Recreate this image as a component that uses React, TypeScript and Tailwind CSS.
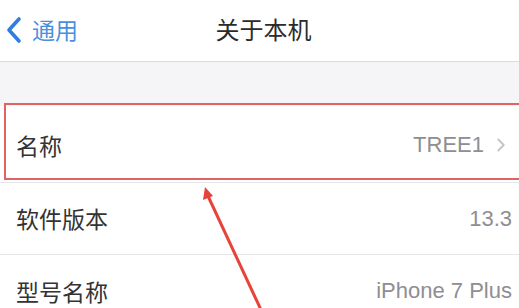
import { ChevronRight } from 'lucide-react'

const rows = [
  { label: '名称', value: 'TREE1', arrow: true },
  { label: '软件版本', value: '13.3', arrow: false },
  { label: '型号名称', value: 'iPhone 7 Plus', arrow: false },
]

const cjk = { fontFamily: '"Noto Sans CJK SC", "Liberation Sans", sans-serif' }

export default function App() {
  return (
    <div className="relative w-[519px] h-[308px] overflow-hidden bg-white" style={cjk}>
      {/* nav bar */}
      <div className="relative h-[62px] border-b border-[#dcdcdf] flex items-center">
        <div className="flex items-center pl-[6px] text-[#4a8fdc]">
          <svg width="16" height="28" viewBox="0 0 16 28" className="mr-[10px] -mt-[2px]">
            <path d="M13 3 L3 14 L13 25" fill="none" stroke="#2f7de1" strokeWidth="3.6" strokeLinecap="round" strokeLinejoin="round" />
          </svg>
          <span className="text-[23px] leading-none -mt-[3px]">通用</span>
        </div>
        <div className="absolute left-0 right-0 top-0 h-full flex items-center justify-center">
          <span className="text-[24px] leading-none text-[#2b2b2b] -mt-[4px] pl-[8px]">关于本机</span>
        </div>
      </div>

      {/* gray gap */}
      <div className="h-[44px] bg-[#f5f5f8]" />

      {/* list */}
      <div className="bg-white">
        {rows.map((r, i) => (
          <div key={r.label} className={i === 0 ? 'h-[77px] pt-[2px]' : 'h-[72px]'}>
            <div className={`h-full flex items-center pl-[16px] pr-[7px] ${i < rows.length - 1 ? 'border-b border-[#e6e6e8]' : ''}`}>
              <span className="text-[23px] text-[#333] leading-none">{r.label}</span>
              <div className="ml-auto flex items-center text-[#8e8e93]">
                <span className="text-[22px] leading-none" style={{ fontFamily: '"Liberation Sans", sans-serif' }}>{r.value}</span>
                {r.arrow && <ChevronRight className="w-[22px] h-[22px] ml-[6px] text-[#c3c3c8]" strokeWidth={2} />}
              </div>
            </div>
          </div>
        ))}
      </div>

      {/* annotation box */}
      <div className="absolute left-[4px] top-[103px] w-[530px] h-[77px] border-2 border-[#e06464]" />

      {/* annotation arrow */}
      <svg className="absolute left-0 top-0" width="519" height="308" viewBox="0 0 519 308">
        <line x1="208" y1="196" x2="262" y2="312" stroke="#e8433b" strokeWidth="3" />
        <polygon points="205,187 203,200 213,196" fill="#e8433b" />
      </svg>
    </div>
  )
}
